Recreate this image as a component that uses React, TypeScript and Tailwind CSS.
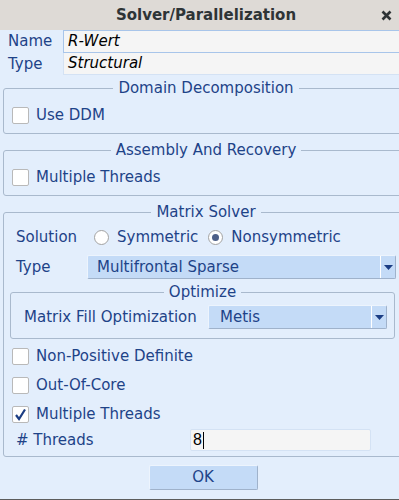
import React, { useState } from "react";

// Solver/Parallelization dialog — frames, combos and checkboxes in the
// light-blue desktop theme.

const FONT = { fontFamily: '"DejaVu Sans", "Noto Sans", sans-serif' };

const Check: React.FC<{ checked?: boolean; label: string }> = ({ checked, label }) => (
  <div className="flex h-[29px] items-center pl-[8px]">
    <span className="flex h-[17px] w-[17px] items-center justify-center rounded-[2px] border border-[#b9b9b9] bg-white">
      {checked && (
        <svg width="13" height="13" viewBox="0 0 13 13">
          <path d="M2 7 L5 11 L11 1.5" fill="none" stroke="#1b3d84" strokeWidth="2.2" />
        </svg>
      )}
    </span>
    <span className="ml-[7px]">{label}</span>
  </div>
);

const Radio: React.FC<{ checked?: boolean }> = ({ checked }) => (
  <span className="flex h-[15px] w-[15px] items-center justify-center rounded-full border border-[#a2a2a2] bg-white">
    {checked && <span className="h-[7px] w-[7px] rounded-full bg-[#4d6089]" />}
  </span>
);

const Combo: React.FC<{ value: string; className: string }> = ({ value, className }) => (
  <div
    className={`flex h-[24px] items-stretch rounded-[2px] border border-[#edf4fd] border-b-[#9fb2cb] border-r-[#9fb2cb] bg-[#c4dbf7] ${className}`}
  >
    <span className="flex flex-1 items-center">{value}</span>
    <span className="flex w-[15px] items-center justify-center border-l border-l-white">
      <svg width="9" height="5" viewBox="0 0 9 5">
        <path d="M0 0 H9 L4.5 5 Z" fill="#1b3d84" />
      </svg>
    </span>
  </div>
);

const Frame: React.FC<{ title: string; className?: string; children: React.ReactNode }> = ({
  title,
  className = "",
  children,
}) => (
  <fieldset className={`rounded-[3px] border border-[#a9b9cd] ${className}`}>
    <legend className="mx-auto h-[17px] px-[5px] leading-[17px]">{title}</legend>
    {children}
  </fieldset>
);

export default function App() {
  const [sym, setSym] = useState(false);

  return (
    <div className="h-[500px] w-[399px] overflow-hidden bg-[#e3eefc] text-[15px] text-[#1e4388]" style={FONT}>
      <div className="w-[412px] border-b-2 border-b-[#5c5c5c]">
        {/* Title bar */}
        <div className="grid h-[30px] grid-cols-[1fr_auto_1fr] items-center bg-[#dedad6] text-[#2e3436]">
          <span />
          <span className="text-[15px] font-bold">Solver/Parallelization</span>
          <span className="mr-[20px] justify-self-end">
            <svg width="11" height="11" viewBox="0 0 11 11">
              <path d="M1.5 1.5 L9.5 9.5 M9.5 1.5 L1.5 9.5" stroke="#2e3436" strokeWidth="2.6" />
            </svg>
          </span>
        </div>

        {/* Name / Type */}
        <div className="flex h-[23px] items-stretch">
          <span className="flex w-[63px] items-center pl-[8px]">Name</span>
          <span className="flex flex-1 items-center border border-[#a8c5ea] border-r-0 bg-[#f5f5f5] pl-[4px] italic text-black">
            R-Wert
          </span>
        </div>
        <div className="flex h-[22px] items-stretch">
          <span className="flex w-[63px] items-center pl-[8px]">Type</span>
          <span className="flex flex-1 items-center border border-t-0 border-[#d4e2f4] border-r-0 bg-[#f5f5f5] pl-[4px] italic text-black">
            Structural
          </span>
        </div>

        <div className="px-[3px]">
          <Frame title="Domain Decomposition" className="mt-[5px]">
            <div className="flex h-[36px] items-center">
              <Check label="Use DDM" />
            </div>
          </Frame>

          <Frame title="Assembly And Recovery" className="mt-[8px]">
            <div className="flex h-[36px] items-center">
              <Check label="Multiple Threads" />
            </div>
          </Frame>

          <Frame title="Matrix Solver" className="mt-[8px]">
            <div className="flex h-[32px] items-center pl-[12px]">
              <span className="w-[78px]">Solution</span>
              <button className="flex items-center" onClick={() => setSym(true)}>
                <Radio checked={sym} />
                <span className="ml-[8px]">Symmetric</span>
              </button>
              <button className="ml-[10px] flex items-center" onClick={() => setSym(false)}>
                <Radio checked={!sym} />
                <span className="ml-[8px]">Nonsymmetric</span>
              </button>
            </div>
            <div className="mt-[2px] flex items-center pl-[12px]">
              <span className="w-[71px]">Type</span>
              <Combo value="Multifrontal Sparse" className="mr-[12px] flex-1 pl-[9px]" />
            </div>

            <Frame title="Optimize" className="mt-[5px] ml-[6px] mr-[13px]">
              <div className="flex items-center pt-[4px] pb-[9px] pl-[13px]">
                <span className="w-[184px]">Matrix Fill Optimization</span>
                <Combo value="Metis" className="mr-[7px] flex-1 pl-[11px]" />
              </div>
            </Frame>

            <div className="mt-[3px]">
              <Check label="Non-Positive Definite" />
              <Check label="Out-Of-Core" />
              <Check checked label="Multiple Threads" />
            </div>
            <div className="flex h-[22px] items-stretch pl-[12px]">
              <span className="flex w-[174px] items-center"># Threads</span>
              <span
                className="flex h-[22px] w-[181px] items-center rounded-[2px] border border-[#d4e2f4] bg-[#f5f5f5] pl-[2px] text-black"
                style={{ fontFamily: '"Liberation Sans", Arial, sans-serif', fontSize: 16 }}
              >
                8<span className="ml-px h-[17px] w-px bg-black" />
              </span>
            </div>
            <div className="h-[5px]" />
          </Frame>

          <div className="mt-[8px] flex justify-center pr-[6px]">
            <button className="h-[25px] w-[109px] rounded-[2px] border border-[#edf4fd] border-b-[#9fb2cb] border-r-[#9fb2cb] bg-[#c4dbf7]">
              OK
            </button>
          </div>
          <div className="h-[9px]" />
        </div>
      </div>
    </div>
  );
}
